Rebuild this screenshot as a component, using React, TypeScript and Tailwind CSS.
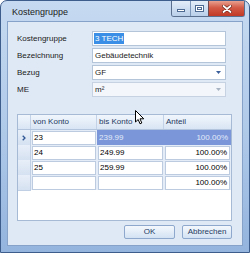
import React from "react";

const rows = [
  { von: "23", bis: "239.99", anteil: "100.00%", active: true },
  { von: "24", bis: "249.99", anteil: "100.00%" },
  { von: "25", bis: "259.99", anteil: "100.00%" },
  { von: "", bis: "", anteil: "100.00%" },
];

const Field = ({ label, children }: { label: string; children: React.ReactNode }) => (
  <div className="flex h-[15px] items-center">
    <div className="w-[75px]">{label}</div>
    {children}
  </div>
);

const Arrow = ({ color }: { color: string }) => (
  <svg width="5" height="3" viewBox="0 0 5 3" className="ml-auto mr-[4px]">
    <path d="M0 0H5L2.5 3Z" fill={color} />
  </svg>
);

const App = () => {
  return (
    <div className="relative h-[255px] w-[250px] bg-white font-['Liberation_Sans',Arial,sans-serif] text-[8px] text-black">
      <div className="flex h-[253px] w-[250px] flex-col rounded-t-[7px] border border-[#3d5d8c] bg-[linear-gradient(#c6daf1,#b0cae9_50%,#94b4de)] px-[6px] pb-[6px]">
        {/* titelleiste */}
        <div className="flex h-[20px] items-start">
          <span className="ml-[5px] mt-[5px] text-[9px] text-[#1b1b1b]">Kostengruppe</span>
          <div className="ml-auto mr-[-2px] flex shrink-0 overflow-hidden rounded-b-[3px] border border-t-0 border-[#5a6f8e]">
            <div className="flex h-[15px] w-[19px] shrink-0 items-center justify-center border-r border-[#7d97bb] bg-[linear-gradient(#e3edf8,#b9cfea)]">
              <div className="mt-[3px] h-[3px] w-[8px] border border-[#4d6a92] bg-white" />
            </div>
            <div className="flex h-[15px] w-[18px] shrink-0 items-center justify-center border-r border-[#6d4a52] bg-[linear-gradient(#e3edf8,#b9cfea)]">
              <div className="h-[7px] w-[9px] border border-[#4d6a92] bg-white p-[1px]">
                <div className="h-full w-full border border-[#4d6a92]" />
              </div>
            </div>
            <div className="flex h-[15px] w-[35px] shrink-0 items-center justify-center bg-red-600 bg-[linear-gradient(#e9a08f,#d35a46_45%,#c13a26)]">
              <svg width="10" height="8" viewBox="0 0 10 8">
                <path d="M1.5 1L8.5 7M8.5 1L1.5 7" stroke="#6b2016" strokeWidth="3.2" strokeLinecap="round" />
                <path d="M1.5 1L8.5 7M8.5 1L1.5 7" stroke="#ffffff" strokeWidth="1.8" strokeLinecap="round" />
              </svg>
            </div>
          </div>
        </div>

        {/* client */}
        <div className="flex flex-1 flex-col border border-[#86a2c8] bg-[#dfe9f5] pl-[9px] pr-[9px] pt-[9px]">
          <div className="flex flex-col gap-[2px] text-[#1a1a1a]">
            <Field label="Kostengruppe">
              <div className="flex h-[15px] w-[134px] items-center border border-[#b4c4d9] bg-white pl-[1px]">
                <span className="bg-[#3b8ee5] px-[1px] leading-[11px] text-white">3 TECH</span>
              </div>
            </Field>
            <Field label="Bezeichnung">
              <div className="flex h-[15px] w-[134px] items-center border border-[#b4c4d9] bg-white pl-[2px]">Gebäudetechnik</div>
            </Field>
            <Field label="Bezug">
              <div className="flex h-[15px] w-[134px] items-center border border-[#b4c4d9] bg-white pl-[2px]">
                GF
                <Arrow color="#3a5f9a" />
              </div>
            </Field>
            <Field label="ME">
              <div className="flex h-[15px] w-[134px] items-center border border-[#c6d2e2] bg-[#f3f6fa] pl-[2px]">
                m²
                <Arrow color="#a7b3c3" />
              </div>
            </Field>
          </div>

          {/* tabelle */}
          <div className="mt-[17px] flex h-[107px] w-[215px] flex-col border border-[#a6bad6] bg-white">
            <div className="grid h-[15px] grid-cols-[13px_66px_67px_67px] border-b border-[#b3c5dd] bg-[linear-gradient(#f1f6fc,#d9e5f4)] text-[#1e3a5f]">
              <div className="border-r border-[#c3d2e6]" />
              <div className="flex items-center border-r border-[#c3d2e6] pl-[2px]">von Konto</div>
              <div className="flex items-center border-r border-[#c3d2e6] pl-[2px]">bis Konto</div>
              <div className="flex items-center pl-[2px]">Anteil</div>
            </div>
            {rows.map((r, i) => (
              <div key={i} className="grid h-[15px] grid-cols-[13px_66px_67px_67px] bg-[#e3ecf7]">
                <div className="flex items-center justify-center border-b border-r border-[#c0cfe3] bg-[linear-gradient(#e8eff9,#d5e1f1)]">
                  {r.active && (
                    <svg width="4" height="6" viewBox="0 0 4 6">
                      <path d="M0.7 0.7L3 3L0.7 5.3" stroke="#2f5594" strokeWidth="1.3" fill="none" />
                    </svg>
                  )}
                </div>
                <div className="p-[1px]">
                  <div className="flex h-full items-center border border-[#bccbdf] bg-white pl-[1px]">{r.von}</div>
                </div>
                {r.active ? (
                  <>
                    <div className="flex items-center bg-[#7b97da] pl-[2px] text-[#e3eaf8]">{r.bis}</div>
                    <div className="flex items-center justify-end bg-[#7b97da] pr-[3px] text-[#e3eaf8]">{r.anteil}</div>
                  </>
                ) : (
                  <>
                    <div className="p-[1px]">
                      <div className="flex h-full items-center border border-[#bccbdf] bg-white pl-[1px]">{r.bis}</div>
                    </div>
                    <div className="p-[1px]">
                      <div className="flex h-full items-center justify-end border border-[#bccbdf] bg-white pr-[2px]">{r.anteil}</div>
                    </div>
                  </>
                )}
              </div>
            ))}
          </div>

          {/* buttons */}
          <div className="mt-[4px] flex justify-end gap-[7px] pr-[1px]">
            <button className="flex h-[14px] w-[51px] items-center justify-center rounded-[2px] border border-[#8da8cc] bg-[linear-gradient(#f4f8fd,#d3e2f3)] text-[#1e3a5f]">
              OK
            </button>
            <button className="flex h-[14px] w-[50px] items-center justify-center rounded-[2px] border border-[#8da8cc] bg-[linear-gradient(#f4f8fd,#d3e2f3)] text-[#1e3a5f]">
              Abbrechen
            </button>
          </div>
        </div>
      </div>

      {/* mauszeiger */}
      <svg className="absolute left-[135px] top-[110px]" width="10" height="15" viewBox="0 0 10 15">
        <path d="M0.5 0.5V12L3.2 9.5L5 13.8L6.8 13L5 8.8H8.8Z" fill="white" stroke="black" strokeWidth="1" strokeLinejoin="round" />
      </svg>
    </div>
  );
};

export default App;
